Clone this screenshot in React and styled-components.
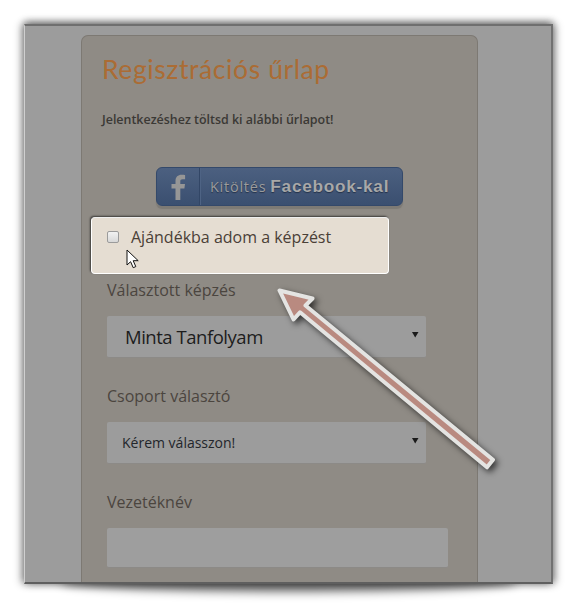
import React from "react";
import styled, { createGlobalStyle } from "styled-components";

const Global = createGlobalStyle`
  html, body { margin: 0; padding: 0; background: #fff; }
  body { width: 577px; height: 614px; overflow: hidden; font-family: "Open Sans", "Liberation Sans", sans-serif; }
`;

const Stage = styled.div`
  position: relative;
  width: 577px;
  height: 614px;
  padding: 24px 24px 30px 24px;
  box-sizing: border-box;
  overflow: hidden;
`;

const BottomShadow = styled.div`
  position: absolute;
  left: 60px;
  right: 60px;
  top: 572px;
  height: 20px;
  border-radius: 50%;
  background: rgba(0, 0, 0, 0.55);
  filter: blur(5px);
`;

const Screen = styled.div`
  position: relative;
  height: 560px;
  box-sizing: border-box;
  background: #9c9c9c;
  border-top: 2px solid #6f6f6f;
  border-left: 1px solid #cfcfcf;
  border-right: 2px solid #717171;
  border-bottom: 2px solid #5f5f5f;
  box-shadow: 0 -3px 7px rgba(0, 0, 0, 0.3), 3px 0 8px rgba(0, 0, 0, 0.3), -3px 0 8px rgba(0, 0, 0, 0.3);
  padding: 9px 74px 0 56px;
  overflow: hidden;
`;

const Card = styled.div`
  height: calc(100% + 1px);
  box-sizing: border-box;
  background: #8f8b85;
  border: 1px solid #7d7973;
  border-bottom: 0;
  border-radius: 7px 7px 0 0;
  padding: 18px 28px 0 20px;
  margin-right: -1px;
  position: relative;
`;

const Title = styled.h1`
  margin: 0;
  font-family: Lato, "Open Sans", sans-serif;
  font-weight: 400;
  font-size: 26.5px;
  line-height: 31px;
  letter-spacing: 0.6px;
  color: #ab6c34;
`;

const Intro = styled.p`
  margin: 25px 0 0 0;
  font-size: 12.45px;
  font-weight: 600;
  line-height: 20px;
  color: #3b3935;
`;

const FbRow = styled.div`
  display: flex;
  justify-content: flex-start;
  margin: 37px 0 0 54px;
`;

const FbButton = styled.div`
  display: flex;
  align-items: stretch;
  width: 247px;
  height: 39px;
  box-sizing: border-box;
  border: 1px solid #34496a;
  border-radius: 6px;
  background: linear-gradient(#4c6080, #3a4f70);
  box-shadow: 0 3px 1px #7d7a75;
`;

const FbIconCell = styled.div`
  width: 42px;
  display: flex;
  align-items: center;
  justify-content: center;
  border-right: 1px solid #324666;
  box-shadow: 1px 0 0 #4e6384;
`;

const FbLabel = styled.div`
  padding-left: 10px;
  display: flex;
  align-items: center;
  gap: 4px;
  font-size: 14.4px;
  color: #9c9c9c;
  letter-spacing: 0.8px;
  font-family: "Open Sans", sans-serif;
  text-shadow: 0 1px 1px #24324a;
`;

const FbBold = styled.b`
  font-family: "Liberation Sans", sans-serif;
  font-size: 17.2px;
  font-weight: 700;
  letter-spacing: 0.75px;
  color: #a8a8a8;
`;

const GiftBox = styled.label`
  display: flex;
  align-items: flex-start;
  width: 298px;
  height: 57px;
  box-sizing: border-box;
  margin: 11px 0 0 -11px;
  padding: 9px 0 0 15px;
  background: #e5ddd2;
  border: 1px solid #fff;
  border-top-color: #eee;
  border-radius: 4px;
  box-shadow: -1px -1px 2px rgba(0, 0, 0, 0.6);
  position: relative;
`;

const Check = styled.span`
  width: 10px;
  height: 10px;
  margin-top: 4px;
  border: 1px solid #9b9b9b;
  border-radius: 2px;
  background: linear-gradient(#f2f2f2, #d8d8d8);
`;

const GiftText = styled.span`
  margin-left: 12px;
  font-size: 16px;
  line-height: 21px;
  color: #4a4037;
`;

const Pointer = styled.svg`
  position: absolute;
  left: 34px;
  top: 31px;
`;

const Label = styled.div`
  margin-left: 5px;
  font-size: 16px;
  line-height: 21px;
  color: #4b453f;
  margin-top: ${p => p.$top}px;
`;

const Select = styled.div`
  display: flex;
  align-items: center;
  justify-content: space-between;
  width: ${p => p.$w || 319}px;
  height: ${p => p.$h || 42}px;
  box-sizing: border-box;
  margin: 15px 0 0 5px;
  padding: 0 7px 0 ${p => p.$pad || 15}px;
  border-radius: 2px;
  background: #9c9c9c;
  border-bottom: 1px solid #8c8a87;
  color: ${p => p.$color || "#1c1c1c"};
  font-size: ${p => p.$size || 13}px;
  letter-spacing: ${p => p.$track || 0}px;
`;

const Caret = styled.svg`
  flex: none;
  margin-bottom: 3px;
`;

const Field = styled.div`
  width: 341px;
  height: 40px;
  box-sizing: border-box;
  margin: 15px 0 0 5px;
  background: #9e9e9e;
  border-radius: 2px;
  border-bottom: 1px solid #8c8a87;
`;

const ArrowOverlay = styled.svg`
  position: absolute;
  left: 0;
  top: 0;
  pointer-events: none;
  filter: drop-shadow(3px 3px 3px rgba(0, 0, 0, 0.65));
`;

const CaretIcon = () => (
  <Caret width="7" height="6" viewBox="0 0 7 6"><path d="M0 0h6.5L3.2 5.5z" fill="#1a1a1a" /></Caret>
);

export default function App() {
  return (
    <Stage>
      <Global />
      <BottomShadow />
      <Screen>
        <Card>
          <Title>Regisztrációs űrlap</Title>
          <Intro>Jelentkezéshez töltsd ki alábbi űrlapot!</Intro>
          <FbRow>
            <FbButton>
              <FbIconCell>
                <svg width="15" height="26" viewBox="0 0 15 26">
                  <path d="M4.5 26V14.5H0.5V10h4V7c0-4 2.4-6.2 6-6.2 1.7 0 3 .1 3.6.2v4.2h-2.4c-1.9 0-2.4.9-2.4 2.3V10h4.7l-.6 4.5H9.3V26z" fill="#969696" />
                </svg>
              </FbIconCell>
              <FbLabel>Kitöltés <FbBold>Facebook-kal</FbBold></FbLabel>
            </FbButton>
          </FbRow>
          <GiftBox>
            <Check />
            <GiftText>Ajándékba adom a képzést</GiftText>
            <Pointer width="13" height="20" viewBox="0 0 13 20">
              <path d="M1 1v15l3.6-3.3 2.6 6 2.6-1.1-2.6-5.9h5z" fill="#fff" stroke="#111" strokeWidth="1" />
            </Pointer>
          </GiftBox>
          <Label $top={6}>Választott képzés</Label>
          <Select $size={18.5} $pad={18} $track={-0.47}>Minta Tanfolyam<CaretIcon /></Select>
          <Label $top={28}>Csoport választó</Label>
          <Select $size={14} $pad={15} $color="#23262b">Kérem válasszon!<CaretIcon /></Select>
          <Label $top={28}>Vezetéknév</Label>
          <Field />
        </Card>
      </Screen>
      <ArrowOverlay width="577" height="614" viewBox="0 0 577 614">
        <polygon
          points="279.5,290.5 312.5,298.5 305.5,305.5 493,459.8 487,467.3 300,312.3 293.5,319.5"
          fill="#b98a80"
          stroke="#e4e4e2"
          strokeWidth="4"
          strokeLinejoin="round"
        />
      </ArrowOverlay>
    </Stage>
  );
}
